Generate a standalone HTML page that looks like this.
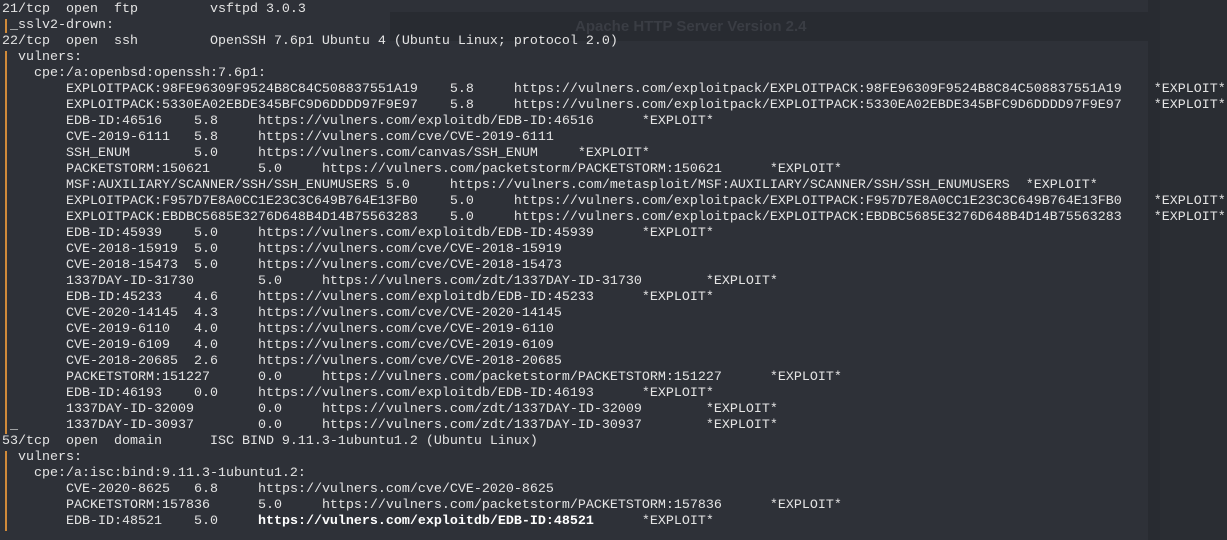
<!DOCTYPE html>
<html><head><meta charset="utf-8"><style>
html,body{margin:0;padding:0;width:1227px;height:540px;overflow:hidden;background:#2a2d33;}
.bg{position:absolute;left:0;top:0;width:1148px;height:540px;background:#2e3138;}
.strip{position:absolute;left:1148px;top:0;width:12px;height:540px;background:#282b31;}
.hdr{position:absolute;left:390px;top:12px;width:758px;height:29px;background:#282b31;}
.hdr span{font:bold 15px "Liberation Sans",sans-serif;color:#3a3d44;position:absolute;left:185px;top:6px;}
pre{position:absolute;left:2px;top:2px;margin:0;font-family:"Liberation Mono",monospace;font-size:13.34px;line-height:16px;color:#e4e4e4;tab-size:8;-moz-tab-size:8;white-space:pre;}
.b{position:absolute;left:5px;width:1.5px;background:#d08a3a;}
b{font-weight:bold;color:#fff}
</style></head><body>
<div class="bg"></div><div class="strip"></div>
<div class="hdr"><span>Apache HTTP Server Version 2.4</span></div>
<div class="b" style="top:19px;height:14px"></div>
<div class="b" style="top:51px;height:383px"></div>
<div class="b" style="top:451px;height:80px"></div>
<pre>21/tcp  open  ftp         vsftpd 3.0.3
 _sslv2-drown:
22/tcp  open  ssh         OpenSSH 7.6p1 Ubuntu 4 (Ubuntu Linux; protocol 2.0)
  vulners:
    cpe:/a:openbsd:openssh:7.6p1:
        EXPLOITPACK:98FE96309F9524B8C84C508837551A19	5.8	https://vulners.com/exploitpack/EXPLOITPACK:98FE96309F9524B8C84C508837551A19	*EXPLOIT*
        EXPLOITPACK:5330EA02EBDE345BFC9D6DDDD97F9E97	5.8	https://vulners.com/exploitpack/EXPLOITPACK:5330EA02EBDE345BFC9D6DDDD97F9E97	*EXPLOIT*
        EDB-ID:46516	5.8	https://vulners.com/exploitdb/EDB-ID:46516	*EXPLOIT*
        CVE-2019-6111	5.8	https://vulners.com/cve/CVE-2019-6111
        SSH_ENUM	5.0	https://vulners.com/canvas/SSH_ENUM	*EXPLOIT*
        PACKETSTORM:150621	5.0	https://vulners.com/packetstorm/PACKETSTORM:150621	*EXPLOIT*
        MSF:AUXILIARY/SCANNER/SSH/SSH_ENUMUSERS	5.0	https://vulners.com/metasploit/MSF:AUXILIARY/SCANNER/SSH/SSH_ENUMUSERS	*EXPLOIT*
        EXPLOITPACK:F957D7E8A0CC1E23C3C649B764E13FB0	5.0	https://vulners.com/exploitpack/EXPLOITPACK:F957D7E8A0CC1E23C3C649B764E13FB0	*EXPLOIT*
        EXPLOITPACK:EBDBC5685E3276D648B4D14B75563283	5.0	https://vulners.com/exploitpack/EXPLOITPACK:EBDBC5685E3276D648B4D14B75563283	*EXPLOIT*
        EDB-ID:45939	5.0	https://vulners.com/exploitdb/EDB-ID:45939	*EXPLOIT*
        CVE-2018-15919	5.0	https://vulners.com/cve/CVE-2018-15919
        CVE-2018-15473	5.0	https://vulners.com/cve/CVE-2018-15473
        1337DAY-ID-31730	5.0	https://vulners.com/zdt/1337DAY-ID-31730	*EXPLOIT*
        EDB-ID:45233	4.6	https://vulners.com/exploitdb/EDB-ID:45233	*EXPLOIT*
        CVE-2020-14145	4.3	https://vulners.com/cve/CVE-2020-14145
        CVE-2019-6110	4.0	https://vulners.com/cve/CVE-2019-6110
        CVE-2019-6109	4.0	https://vulners.com/cve/CVE-2019-6109
        CVE-2018-20685	2.6	https://vulners.com/cve/CVE-2018-20685
        PACKETSTORM:151227	0.0	https://vulners.com/packetstorm/PACKETSTORM:151227	*EXPLOIT*
        EDB-ID:46193	0.0	https://vulners.com/exploitdb/EDB-ID:46193	*EXPLOIT*
        1337DAY-ID-32009	0.0	https://vulners.com/zdt/1337DAY-ID-32009	*EXPLOIT*
 _      1337DAY-ID-30937	0.0	https://vulners.com/zdt/1337DAY-ID-30937	*EXPLOIT*
53/tcp  open  domain      ISC BIND 9.11.3-1ubuntu1.2 (Ubuntu Linux)
  vulners:
    cpe:/a:isc:bind:9.11.3-1ubuntu1.2:
        CVE-2020-8625	6.8	https://vulners.com/cve/CVE-2020-8625
        PACKETSTORM:157836	5.0	https://vulners.com/packetstorm/PACKETSTORM:157836	*EXPLOIT*
        EDB-ID:48521	5.0	<b>https://vulners.com/exploitdb/EDB-ID:48521</b>	*EXPLOIT*
</pre>
</body></html>
